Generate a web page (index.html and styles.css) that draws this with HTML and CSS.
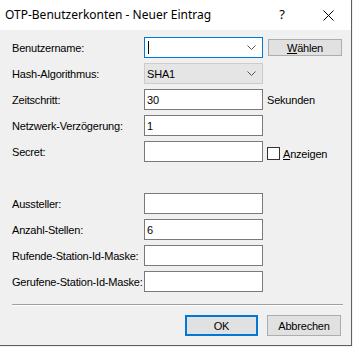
FILE: index.html
```html
<!DOCTYPE html>
<html lang="de">
<head>
  <meta charset="UTF-8">
  <title>OTP-Benutzerkonten - Neuer Eintrag</title>
  <link rel="stylesheet" href="styles.css">
</head>
<body>
  <div class="window">
    <div class="titlebar">
      <span class="title">OTP-Benutzerkonten - Neuer Eintrag</span>
      <span class="help">?</span>
      <svg class="close" width="11" height="11" viewBox="0 0 11 11">
        <path d="M0.5 0.5 L10.5 10.5 M10.5 0.5 L0.5 10.5" stroke="#000" stroke-width="1" fill="none"/>
      </svg>
    </div>

    <div class="content">
      <div class="form">
        <label class="lbl">Benutzername:</label>
        <div class="combo focus">
          <span class="caret"></span>
          <svg class="chev" width="9" height="5" viewBox="0 0 9 5"><path d="M0.5 0.5 L4.5 4.5 L8.5 0.5" stroke="#555" fill="none"/></svg>
        </div>
        <button class="btn small"><u>W</u>ählen</button>

        <label class="lbl">Hash-Algorithmus:</label>
        <div class="combo readonly">
          <span class="val">SHA1</span>
          <svg class="chev" width="9" height="5" viewBox="0 0 9 5"><path d="M0.5 0.5 L4.5 4.5 L8.5 0.5" stroke="#555" fill="none"/></svg>
        </div>
        <span></span>

        <label class="lbl">Zeitschritt:</label>
        <div class="field">30</div>
        <span class="extra">Sekunden</span>

        <label class="lbl">Netzwerk-Verzögerung:</label>
        <div class="field">1</div>
        <span></span>

        <label class="lbl">Secret:</label>
        <div class="field"></div>
        <span class="extra check"><span class="box"></span><span><u>A</u>nzeigen</span></span>

        <span class="spacer"></span>

        <label class="lbl">Aussteller:</label>
        <div class="field"></div>
        <span></span>

        <label class="lbl">Anzahl-Stellen:</label>
        <div class="field">6</div>
        <span></span>

        <label class="lbl">Rufende-Station-Id-Maske:</label>
        <div class="field"></div>
        <span></span>

        <label class="lbl">Gerufene-Station-Id-Maske:</label>
        <div class="field"></div>
        <span></span>
      </div>

      <div class="sep"></div>

      <div class="buttons">
        <button class="btn default">OK</button>
        <button class="btn">Abbrechen</button>
      </div>
    </div>
  </div>
</body>
</html>
```

FILE: styles.css
```css
html, body {
  margin: 0;
  padding: 0;
  background: #f0f0f0;
}
body {
  font-family: 'Liberation Sans', Arial, sans-serif;
  font-size: 11px;
  letter-spacing: -0.2px;
  color: #000;
}
.window {
  width: 351px;
  height: 345px;
  border-right: 1px solid #5f5f5f;
  border-bottom: 1px solid #5f5f5f;
  background: #f0f0f0;
  display: flex;
  flex-direction: column;
}
.titlebar {
  height: 30px;
  background: #fff;
  display: flex;
  align-items: center;
  padding-left: 5px;
  box-sizing: border-box;
  letter-spacing: 0;
}
.title {
  font-family: 'Noto Sans', 'Liberation Sans', sans-serif;
  font-size: 12px;
  flex: 1;
  padding-bottom: 2px;
}
.help {
  font-family: 'Noto Sans', sans-serif;
  font-size: 13px;
  margin-right: 38px;
  padding-bottom: 2px;
}
.close {
  margin-right: 17px;
}
.content {
  padding: 7px 0 0 12px;
  flex: 1;
  display: flex;
  flex-direction: column;
}
.form {
  display: grid;
  grid-template-columns: 132px 119px auto;
  grid-auto-rows: 21px;
  row-gap: 5px;
  align-items: center;
}
.spacer {
  grid-column: 1 / 4;
}
.lbl {
  white-space: nowrap;
}
.field, .combo {
  height: 21px;
  box-sizing: border-box;
  border: 1px solid #7a7a7a;
  background: #fff;
  padding-left: 2px;
  display: flex;
  align-items: center;
}
.combo {
  justify-content: space-between;
  padding-right: 6px;
}
.combo.focus {
  border-color: #0078d7;
}
.combo.readonly {
  background: #e5e5e5;
  border-color: #cccccc;
}
.caret {
  width: 1px;
  height: 13px;
  background: #000;
  margin-left: 1px;
}
.extra {
  margin-left: 4px;
  white-space: nowrap;
}
.check {
  display: flex;
  align-items: center;
  gap: 3px;
  padding-top: 4px;
}
.box {
  width: 11px;
  height: 11px;
  border: 1px solid #333;
  background: #fff;
}
.btn {
  font-family: 'Liberation Sans', Arial, sans-serif;
  font-size: 11px;
  letter-spacing: -0.2px;
  color: #000;
  background: #e1e1e1;
  border: 1px solid #adadad;
  padding: 0;
  height: 21px;
  width: 74px;
}
.btn.small {
  height: 17px;
  margin-left: 5px;
}
.btn.default {
  border: 2px solid #0078d7;
  width: 73px;
}
.sep {
  margin-top: 12px;
  width: 331px;
  height: 1px;
  background: #a0a0a0;
  border-bottom: 1px solid #fff;
}
.buttons {
  display: flex;
  justify-content: flex-end;
  gap: 9px;
  margin-top: 9px;
  margin-right: 10px;
}
```
